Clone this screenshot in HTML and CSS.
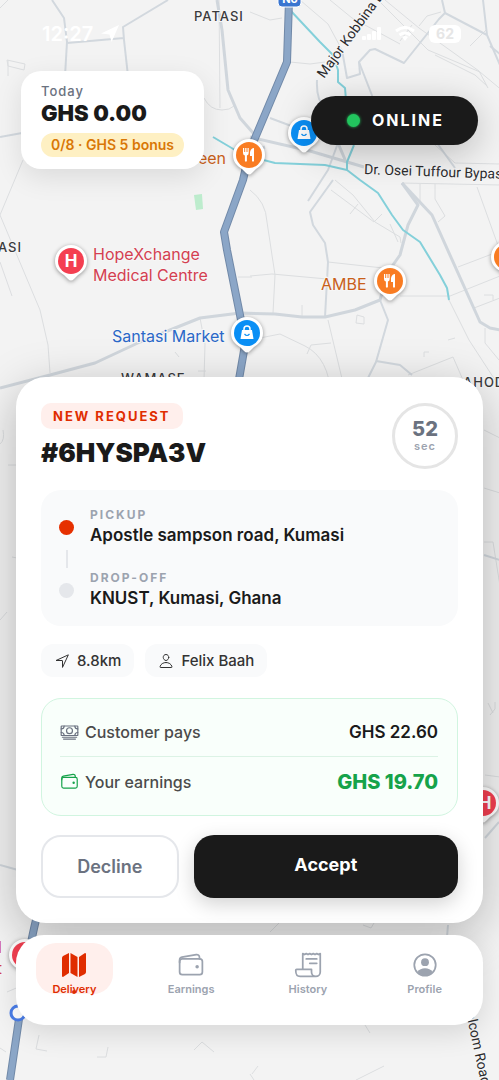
FILE: index.html
```html
<!DOCTYPE html>
<html lang="en">

<head>
    <meta charset="UTF-8">
    <meta name="viewport" content="width=device-width, initial-scale=1.0">
    <title>New Request</title>
    <link rel="stylesheet" href="styles.css">
</head>

<body>
    <svg class="map" viewBox="0 0 499 1080" preserveAspectRatio="xMidYMin slice">
        <defs>
            <g id="pin">
                <path class="pin-shape" d="M0-16a16 16 0 0 1 16 16c0 7-4 11-9 14l-4 4q-3 3-6 0l-4-4c-5-3-9-7-9-14a16 16 0 0 1 16-16z" />
                <circle r="13" />
            </g>
            <g id="fork" fill="#fff">
                <path d="M-6-7h1.200v4h1v-4h1.300v4h1v-4h1.200v5q0 2-1.800 2.500V6q-1 1.500-2 0V.5Q-6 0-6-2z" />
                <path d="M5-7v13q-1 1.500-2 0V1H1v-4q1-4 4-4z" />
            </g>
            <g id="bag">
                <path d="M-3-2v-2q0-3 3-3t3 3v2" fill="none" stroke="#fff" stroke-width="1.500" />
                <path d="M-5-3H5L6.500 6h-13z" fill="#fff" />
                <path d="M-2.500 1q2.500 3 5 0" fill="none" stroke="#0a8ff5" stroke-width="1.200" />
            </g>
        </defs>

        <path d="M194 195l8-1 1 15-7 1z" fill="#bdeccd" />

        <g class="lane">
            <path d="M0 8l8-8M7 60l18 4-1 6-16-4zM8 60v16" />
            <path d="M23 160L0 215l40 95 8 35 2 28M0 262l12 34" />
            <path d="M219 0l1 108M204 98q6 12 18 12 8 0 12-4" />
            <path d="M250 12l20 8 12-2M330 0l22 18 48 26M300 0l28 24 14 26M378 0l50 50 52 22 24 20" />
            <path d="M412 25l-12 16M385 0l34 28 60 43 9 17M470 46l16-16M419 26l8-10 14-4" />
            <path d="M290 62l20 2 15-2M435 55l40 20 12 11M371 95l64 50 20 18 45 1M250 190q16 12 17 32l8 53-2 38" />
            <path d="M335 180l18 15 22 27 25 15 1 6M358 204l-8 10M331 190l43 32 8-8M390 224l8 18" />
            <path d="M250 276l22-2 55 5M328 262l55 6M402 183l98 2M435 184v15l10 17-7 6M420 184v19" />
            <path d="M477 187l23 64M458 267l42-16M400 296h50l50-20M474 308l26-10M485 328v15l14 17" />
            <path d="M449 300l20 40 26 40M328 320l16 67 32-8M250 340l30-6 25 12q24 12 26 50M307 354l4-9 20-2" />
            <path d="M302 305v12M357 315l7 2v7l-8-1zM424 357v-5h5M448 340l7-2M408 375l45-18 10 23" />
            <path d="M200 318l5 26-1 36M175 352l4 5M238 277h14M484 295h9v5M198 371h8" />
            <path d="M3 430q2 10-3 14M8 465h8M0 620l7-8M12 557l5 1M484 430l16 8M484 488l16 5M484 542h9l7 44" />
            <path d="M490 715l5-6v-7M488 703l5 10M485 775l15 2M39 1035l-3 14 11 2M97 1057h9l2-10" />
            <path d="M194 1050l8-8 12 10M356 1080l28-14M365 1025l5 8M270 932l10-10M363 925l8 3 3-5" />
            <path d="M0 1048l6 4M7 992l14-6M252 1074l6-8M254 1080l-4-6" />
        </g>

        <g class="street">
            <path d="M52 0l12 18 3 24-2 34M67 43l57-5M168 0l-45 27 1 13 4 36M0 137l22-4" />
            <path d="M342 50l5 28 13-4-1-12 11-12 5-1 29 14 35-44 6-6-3-13M445 13l42 22 13 30M483 0l4 35" />
            <path d="M359 62l14 36M437 143l18 25M270 118l32 12M317 80q-1 20 8 28M338 143l-10 27-20 31M500 54l-10-8" />
            <path d="M333 180l-23 32 3 13 12 18 3 19-3 55" />
            <path d="M380 300l8 20-12 42-9 18M376 361l24 4 12 10M484 555l16 5M448 925l-1 12M0 865l18 5" />
            <path d="M499 822l-14 16" />
        </g>
        <g class="road">
            <path d="M217 0l5 30 6 60 12 28 14 16M250 137l60 14 54 16M250 152l15-5M338 143l8 19" />
            <path d="M0 388l50-13 45-12 45-21 60-24 40-5 35 1 27 3 23 0 30-7 25-10 8-28 12-17 8-30 10-20-16-22" />
            <path d="M402 183l30 32 48 107 10 6 10 2" />
        </g>
        <g class="river">
            <path d="M213 137l22 13M252 157l23 6 50 2 22 5M290 10l30 32 13 13 5 15v12l7 6 1 12M354 145l-7 17v8l13 10 18 13 14 22 11 15 17 12 20 33 7 13 2 12" />
        </g>
        <g class="highway">
            <path d="M289 0l-2 62-37 88-7 30-19 52 3 18 14 70 4 25-7 40M36 920q-6 24-12 65L10 1080" />
            <path class="highway-fill" d="M289 0l-2 62-37 88-7 30-19 52 3 18 14 70 4 25-7 40M36 920q-6 24-12 65L10 1080" />
        </g>
        <rect x="278" y="-14" width="23" height="21" rx="4" fill="#3975d0" stroke="#fff" />
        <text class="shield" x="290" y="3">N6</text>

        <use href="#pin" x="249" y="155" fill="#f97c22" />
        <use href="#fork" x="249" y="155" />
        <use href="#pin" x="390" y="281" fill="#f97c22" />
        <use href="#fork" x="390" y="281" />
        <use href="#pin" x="507" y="257" fill="#f97c22" />
        <use href="#pin" x="304" y="133" fill="#0a8ff5" />
        <use href="#bag" x="304" y="133" />
        <use href="#pin" x="247" y="333" fill="#0a8ff5" />
        <use href="#bag" x="247" y="333" />
        <use href="#pin" x="71" y="261" fill="#f43f51" />
        <text class="pin-letter" x="71" y="267">H</text>
        <use href="#pin" x="483" y="803" fill="#f43f51" />
        <text class="pin-letter" x="485" y="809">H</text>
        <use href="#pin" x="25" y="955" fill="#f43f51" />
        <circle cx="18" cy="1013" r="7" fill="#fff" stroke="#4a7de8" stroke-width="3" />

        <g class="labels">
            <text class="area" x="194" y="21">PATASI</text>
            <text class="area" x="22" y="252" text-anchor="end">ASI</text>
            <text class="area" x="121" y="383">WAMASE</text>
            <text class="area" x="463" y="387">AHODWO</text>
            <text class="roadname" transform="translate(324 79) rotate(-54)">Major Kobbina Drive</text>
            <text class="roadname" transform="translate(364 174) rotate(2)">Dr. Osei Tuffour Bypass</text>
            <text class="roadname" transform="translate(466 1013) rotate(78)">elcom Road</text>
            <text class="food" x="226" y="164" text-anchor="end">een</text>
            <text class="food" x="321" y="290">AMBE</text>
            <text class="health" x="93" y="260">HopeXchange</text>
            <text class="health" x="93" y="281">Medical Centre</text>
            <text class="shop" x="112" y="342">Santasi Market</text>
            <text class="health" x="2" y="953" text-anchor="end">Hospital</text>
            <text class="health" x="2" y="974" text-anchor="end">East</text>
        </g>
    </svg>

    <div class="app">
        <div class="status-bar">
            <div class="status-time">
                <span>12:27</span>
                <svg width="18" height="17" viewBox="0 0 17 16" fill="#fff"><path d="M17 0L10 16 8 9 0 8z" /></svg>
            </div>
            <div class="status-icons">
                <svg width="19" height="13" viewBox="0 0 19 13" fill="#fff">
                    <rect y="9" width="4" height="4" rx="1" />
                    <rect x="5" y="7" width="4" height="6" rx="1" />
                    <rect x="10" y="4" width="4" height="9" rx="1" />
                    <rect x="15" width="4" height="13" rx="1" />
                </svg>
                <svg width="20" height="15" viewBox="0 0 20 15" fill="none" stroke="#fff" stroke-width="3">
                    <path d="M1 5q9-7 18 0M4.500 9q5.500-4 11 0" />
                    <path d="M7 11q3-2 6 0l-3 4z" fill="#fff" stroke="none" />
                </svg>
                <span class="battery">62</span>
            </div>
        </div>

        <header class="top">
            <div class="today">
                <span class="today-label">Today</span>
                <strong class="today-amount">GHS 0.00</strong>
                <span class="bonus">0/8 · GHS 5 bonus</span>
            </div>
            <button type="button" class="online"><span class="online-dot"></span>ONLINE</button>
        </header>

        <main class="request">
            <div class="request-head">
                <div>
                    <span class="tag">NEW REQUEST</span>
                    <h1>#6HYSPA3V</h1>
                </div>
                <div class="timer">
                    <strong>52</strong>
                    <span>sec</span>
                </div>
            </div>

            <div class="route">
                <div class="stop">
                    <span class="dot pickup"></span>
                    <div>
                        <span class="stop-label">PICKUP</span>
                        <p>Apostle sampson road, Kumasi</p>
                    </div>
                </div>
                <div class="route-line"></div>
                <div class="stop">
                    <span class="dot"></span>
                    <div>
                        <span class="stop-label">DROP-OFF</span>
                        <p>KNUST, Kumasi, Ghana</p>
                    </div>
                </div>
            </div>

            <div class="chips">
                <span class="chip">
                    <svg class="icon-small" viewBox="0 0 512 512"><path d="M448 64L64 240h200a8 8 0 0 1 8 8v200z" /></svg>
                    8.8km
                </span>
                <span class="chip">
                    <svg class="icon-small" viewBox="0 0 512 512">
                        <path d="M344 144c-4 53-44 96-88 96s-84-43-88-96c-4-55 35-96 88-96s92 42 88 96z" />
                        <path d="M256 304c-87 0-175 48-192 139-2 11 5 21 16 21h352c11 0 18-10 16-21-17-91-105-139-192-139z" />
                    </svg>
                    Felix Baah
                </span>
            </div>

            <div class="pay">
                <div class="pay-row">
                    <svg class="icon-row" viewBox="0 0 512 512">
                        <rect x="32" y="80" width="448" height="256" rx="16" />
                        <circle cx="256" cy="208" r="80" />
                        <path d="M64 384h384M96 432h320M480 160a80 80 0 0 1-80-80M32 160a80 80 0 0 0 80-80M480 256a80 80 0 0 0-80 80M32 256a80 80 0 0 1 80 80" />
                    </svg>
                    <span>Customer pays</span>
                    <strong>GHS 22.60</strong>
                </div>
                <div class="pay-row earn">
                    <svg class="icon-row" viewBox="0 0 512 512">
                        <rect x="48" y="144" width="416" height="288" rx="48" />
                        <path d="M411 144v-30a50 50 0 0 0-59-49L89 110a50 50 0 0 0-41 49v49" />
                        <circle class="solid" cx="368" cy="288" r="32" />
                    </svg>
                    <span>Your earnings</span>
                    <strong>GHS 19.70</strong>
                </div>
            </div>

            <div class="actions">
                <button type="button" class="decline">Decline</button>
                <button type="button" class="accept">Accept</button>
            </div>
        </main>

        <nav class="tabs">
            <a href="#delivery" class="tab active">
                <svg class="icon-tab" viewBox="0 0 28 28">
                    <path class="solid" d="M2 7q0-1 1-2l6-3v20l-6 4q-1 0-1-1zM10.500 2l7 4v20l-7-4zM19 6l6-4q1 0 1 1v18q0 1-1 2l-6 3z" />
                </svg>
                <span>Delivery</span>
            </a>
            <a href="#earnings" class="tab">
                <svg class="icon-tab" viewBox="0 0 512 512">
                    <rect x="48" y="144" width="416" height="288" rx="48" />
                    <path d="M411 144v-30a50 50 0 0 0-59-49L89 110a50 50 0 0 0-41 49v49" />
                    <circle class="solid" cx="368" cy="288" r="32" />
                </svg>
                <span>Earnings</span>
            </a>
            <a href="#history" class="tab">
                <svg class="icon-tab" viewBox="0 0 512 512">
                    <path d="M160 336V48l32 16 32-16 32 16 32-16 32 16 32-16 32 16 32-16 32 16 32-16v336a80 80 0 0 1-80 80 80 80 0 0 1-80-80v-48H48a16 16 0 0 0-16 16c0 64 7 112 80 112h288M224 144h192M288 224h128" />
                </svg>
                <span>History</span>
            </a>
            <a href="#profile" class="tab">
                <svg class="icon-tab" viewBox="0 0 512 512">
                    <circle cx="256" cy="256" r="196" />
                    <circle class="solid" cx="256" cy="204" r="72" />
                    <path class="solid" d="M118 384c28-48 80-70 138-70s110 22 138 70c-34 40-82 62-138 62s-104-22-138-62z" />
                </svg>
                <span>Profile</span>
            </a>
        </nav>
    </div>
</body>

</html>
```
FILE: styles.css
```css
* {
    box-sizing: border-box;
}

body {
    margin: 0;
    position: relative;
    background-color: #f3f3f3;
    color: #1a1a1a;
    font-family: Inter, 'Liberation Sans', sans-serif;
}

h1,
p {
    margin: 0;
}

button {
    font-family: inherit;
    cursor: pointer;
}

/* map */
.map {
    position: absolute;
    top: 0;
    left: 0;
    width: 100%;
    height: 100%;
}

.lane,
.street,
.road,
.river,
.highway {
    fill: none;
    stroke-linejoin: round;
}

.lane {
    stroke: #dcdee0;
    stroke-width: 1;
}

.street {
    stroke: #d2d8de;
    stroke-width: 2;
}

.road {
    stroke: #d0d6dc;
    stroke-width: 3;
}

.river {
    stroke: #84d0da;
    stroke-width: 2;
}

.highway {
    stroke: #7189a8;
    stroke-width: 8;
}

.highway-fill {
    stroke: #8ba6c7;
    stroke-width: 6;
}

.pin-shape {
    fill: #fff;
    filter: drop-shadow(0 1px 2px rgba(0, 0, 0, 0.4));
}

.pin-letter,
.shield {
    fill: #fff;
    font-size: 17px;
    font-weight: 700;
    text-anchor: middle;
}

.shield {
    font-size: 11px;
}

.labels {
    font-size: 16px;
    paint-order: stroke;
    stroke: #f6f6f6;
    stroke-width: 2px;
}

.area {
    fill: #3a3a3c;
    font-size: 13px;
    font-weight: 500;
    letter-spacing: 1px;
}

.roadname {
    fill: #2c2c2e;
    font-family: Roboto, sans-serif;
    font-size: 14px;
}

.food {
    fill: #c8601a;
}

.health {
    fill: #d43f51;
}

.shop {
    fill: #2a68c8;
}

/* screen */
.app {
    position: relative;
    display: flex;
    flex-direction: column;
    min-height: 100vh;
    padding-bottom: 55px;
}

.status-bar {
    display: flex;
    justify-content: space-between;
    align-items: center;
    height: 71px;
    padding: 0 38px 4px 42px;
    color: #fff;
}

.status-time,
.status-icons {
    display: flex;
    align-items: center;
    gap: 8px;
    font-size: 20px;
    font-weight: 600;
}

.status-icons {
    gap: 14px;
}

.battery {
    padding: 0 7px;
    border-radius: 6px;
    background-color: #fff;
    color: #e6e6e6;
    font-size: 14px;
    font-weight: 700;
    line-height: 18px;
}

.top {
    display: flex;
    justify-content: space-between;
    align-items: center;
    padding: 0 21px;
    margin-bottom: 24px;
}

.today {
    display: flex;
    flex-direction: column;
    align-items: flex-start;
    padding: 12px 20px;
    border-radius: 20px;
    background-color: #fff;
    box-shadow: 0 8px 28px rgba(0, 0, 0, 0.1);
}

.today-label {
    color: #6b7280;
    font-size: 13px;
    font-weight: 500;
    letter-spacing: 1px;
    line-height: 16px;
}

.today-amount {
    font-size: 22px;
    font-weight: 900;
    line-height: 28px;
    margin-bottom: 6px;
}

.bonus {
    padding: 0 10px;
    border-radius: 12px;
    background-color: #fef0c3;
    color: #d97706;
    font-size: 14px;
    font-weight: 600;
    line-height: 24px;
}

.online {
    display: flex;
    align-items: center;
    gap: 12px;
    height: 49px;
    padding: 0 34px 0 36px;
    border: none;
    border-radius: 25px;
    background-color: #1a1a1a;
    color: #fff;
    font-size: 16px;
    font-weight: 700;
    letter-spacing: 2px;
    box-shadow: 0 8px 36px rgba(0, 0, 0, 0.24);
}

.online-dot {
    width: 13px;
    height: 13px;
    border-radius: 50%;
    background-color: #22c55e;
    box-shadow: 0 0 3px #22c55e;
}

/* request sheet */
.request {
    margin: auto 16px 12px;
    padding: 26px 25px 25px;
    border-radius: 30px;
    background-color: #fff;
    box-shadow: 0 12px 48px rgba(0, 0, 0, 0.26);
}

.request-head {
    display: flex;
    justify-content: space-between;
    align-items: flex-start;
    margin-bottom: 21px;
}

.tag {
    display: inline-block;
    padding: 0 12px;
    border-radius: 10px;
    background-color: #ffefec;
    color: #e02d00;
    font-size: 13px;
    font-weight: 700;
    letter-spacing: 2px;
    line-height: 26px;
}

h1 {
    margin-top: 8px;
    font-size: 26px;
    font-weight: 900;
    line-height: 32px;
}

.timer {
    display: flex;
    flex-direction: column;
    align-items: center;
    justify-content: center;
    width: 66px;
    height: 66px;
    border: 3px solid #e5e5e5;
    border-radius: 50%;
    color: #6b7280;
}

.timer strong {
    font-size: 20px;
    font-weight: 800;
    line-height: 20px;
}

.timer span {
    color: #9ca3af;
    font-size: 11px;
    font-weight: 600;
    letter-spacing: 1px;
    line-height: 14px;
}

.route {
    padding: 17px 18px 16px;
    border-radius: 20px;
    background-color: #f9fafb;
}

.stop {
    display: flex;
    align-items: center;
    gap: 16px;
}

.dot {
    width: 15px;
    height: 15px;
    border-radius: 50%;
    background-color: #e5e7eb;
}

.pickup {
    background-color: #e63000;
}

.route-line {
    width: 2px;
    height: 18px;
    margin: 3px 0 2px 7px;
    background-color: #e5e7eb;
}

.stop-label {
    display: block;
    color: #9ca3af;
    font-size: 12px;
    font-weight: 700;
    letter-spacing: 2px;
    line-height: 16px;
}

.stop p {
    font-size: 17px;
    font-weight: 600;
    line-height: 24px;
}

.chips {
    display: flex;
    gap: 11px;
    margin: 18px 0 21px;
}

.chip {
    display: flex;
    align-items: center;
    gap: 7px;
    height: 33px;
    padding: 0 13px;
    border-radius: 12px;
    background-color: #f9fafb;
    color: #333;
    font-size: 15px;
    font-weight: 500;
}

svg[class^="icon"] {
    flex-shrink: 0;
    fill: none;
    stroke: currentColor;
    stroke-width: 32;
    stroke-linecap: round;
    stroke-linejoin: round;
}

svg .solid {
    fill: currentColor;
    stroke-width: 0;
}

.icon-small {
    width: 16px;
    height: 16px;
}

.icon-row {
    width: 19px;
    height: 19px;
    color: #6b7280;
}

.icon-tab {
    width: 28px;
    height: 28px;
}

.pay {
    padding: 9px 19px 9px 18px;
    border: 1px solid #d1f5e0;
    border-radius: 20px;
    background-color: #f9fffb;
}

.pay-row {
    display: flex;
    align-items: center;
    gap: 6px;
    height: 48px;
    color: #4b4b4b;
    font-size: 16px;
    font-weight: 500;
}

.pay-row strong {
    margin-left: auto;
    color: #1a1a1a;
    font-size: 17px;
    font-weight: 600;
}

.earn {
    height: 50px;
    border-top: 1px solid #dcf3e5;
}

.earn .icon-row {
    color: #16a34a;
}

.pay-row.earn strong {
    color: #16a34a;
    font-size: 20px;
    font-weight: 800;
}

.actions {
    display: flex;
    gap: 15px;
    margin-top: 19px;
}

.actions button {
    height: 63px;
    padding: 0;
    border-radius: 20px;
    font-size: 18px;
}

.actions .decline {
    flex: 0 0 33%;
    border: 2px solid #e5e7eb;
    background-color: #fff;
    color: #6b7280;
    font-weight: 600;
}

.actions .accept {
    flex: 1;
    padding-bottom: 4px;
    border: none;
    background-color: #1a1a1a;
    color: #fff;
    font-weight: 700;
    box-shadow: 0 6px 20px rgba(0, 0, 0, 0.18);
}

/* bottom tabs */
.tabs {
    display: flex;
    height: 90px;
    margin: 0 16px;
    padding-top: 8px;
    border-radius: 28px;
    background-color: #fff;
    box-shadow: 0 8px 28px rgba(0, 0, 0, 0.12);
}

.tab {
    flex: 1;
    display: flex;
    flex-direction: column;
    align-items: center;
    height: 51px;
    margin: 0 20px;
    padding-top: 8px;
    border-radius: 20px;
    color: #9ca3af;
    font-size: 11px;
    font-weight: 600;
    line-height: 20px;
    text-decoration: none;
}

.active {
    position: relative;
    background-color: #ffefec;
    color: #e02d00;
}

.active::after {
    content: "";
    position: absolute;
    bottom: 0;
    left: 50%;
    width: 4px;
    height: 4px;
    margin-left: -2px;
    border-radius: 50%;
    background-color: #e02d00;
}
```
